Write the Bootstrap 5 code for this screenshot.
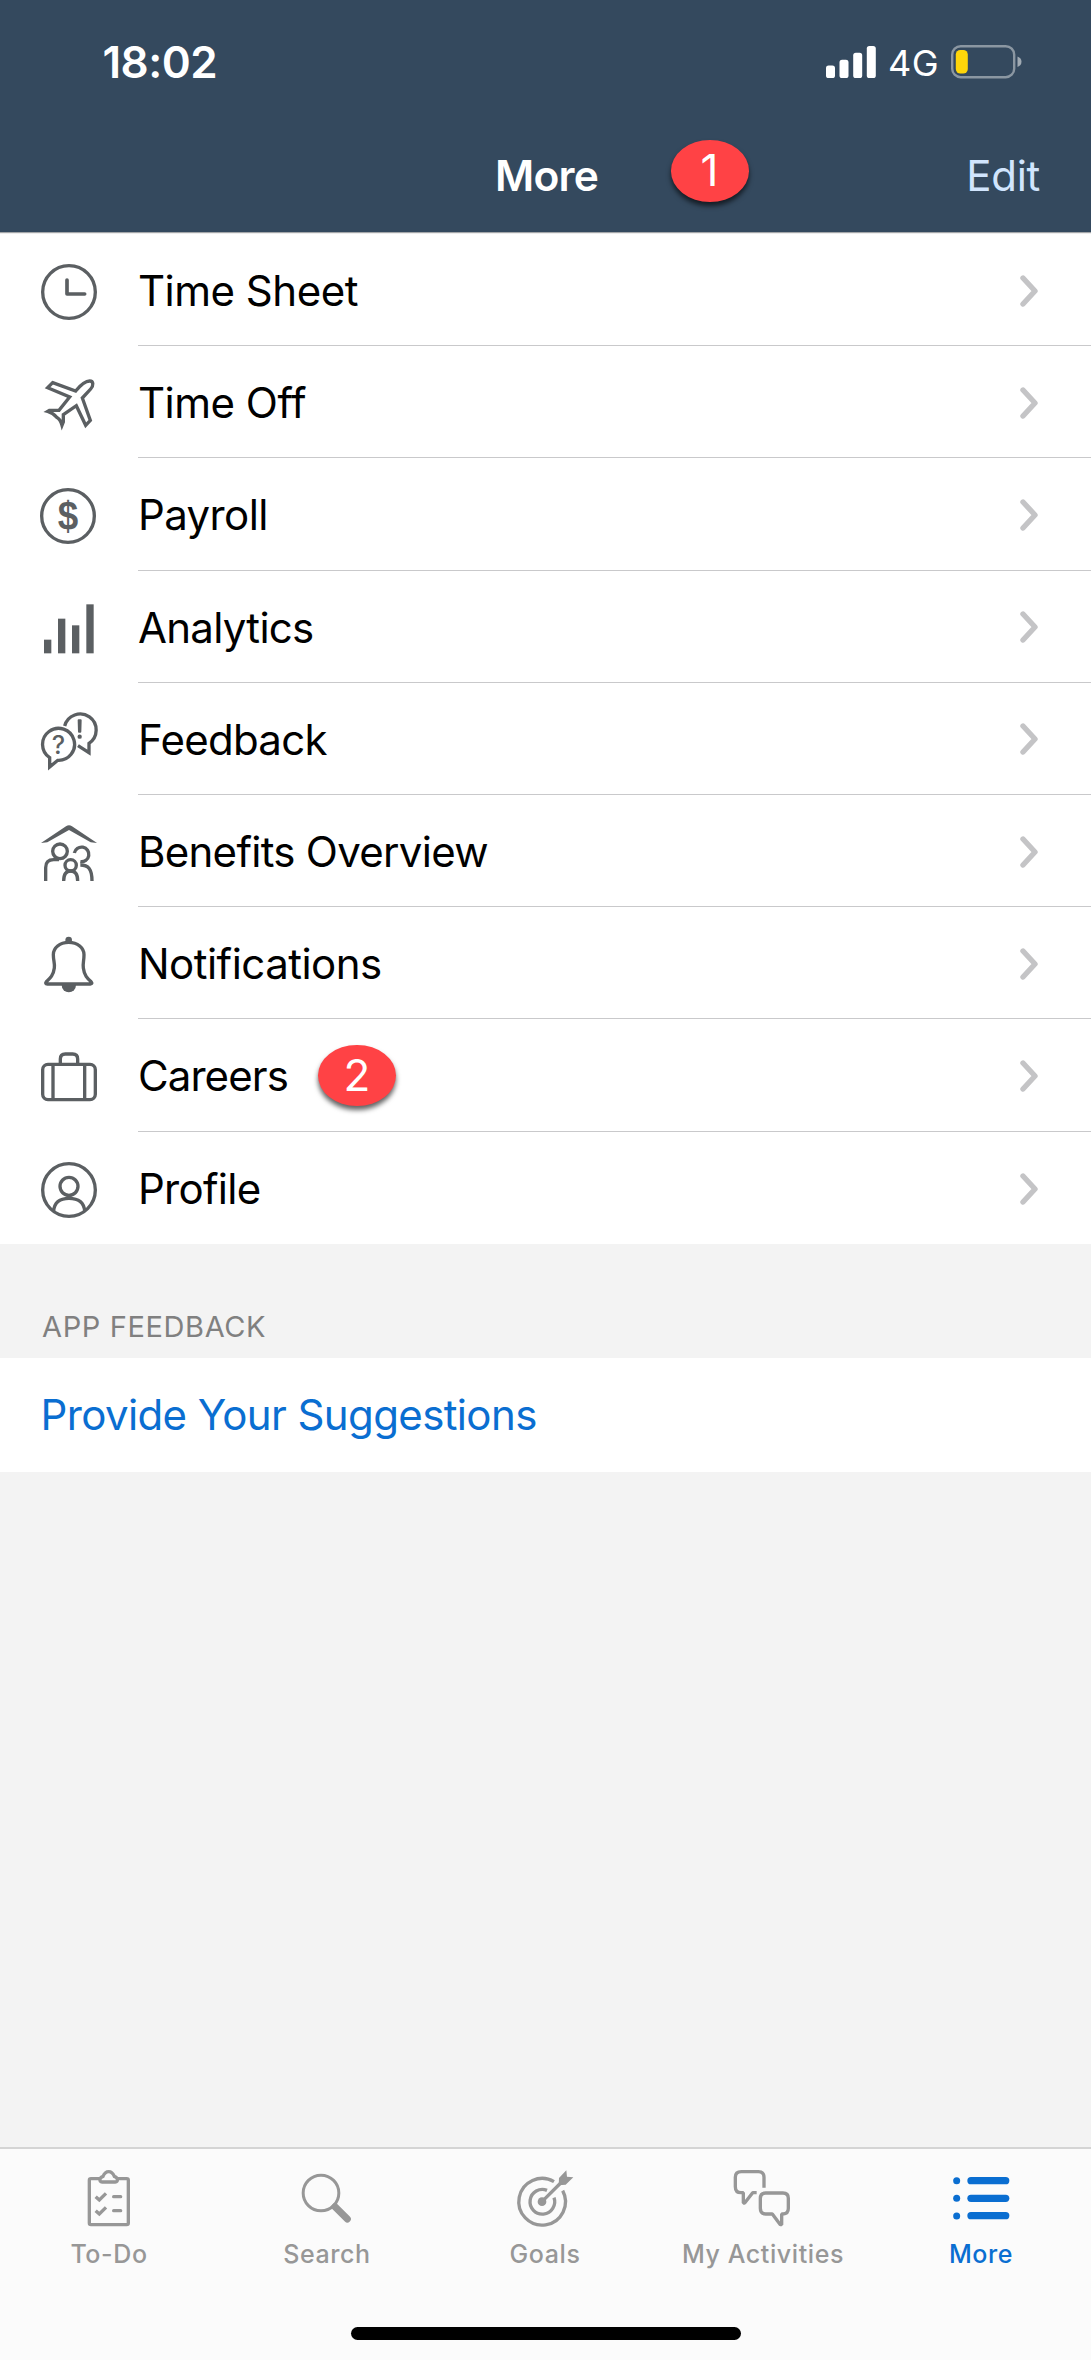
<!DOCTYPE html>
<html lang="en">
<head>
<meta charset="utf-8">
<meta name="viewport" content="width=device-width, initial-scale=1">
<title>More</title>
<link href="https://cdn.jsdelivr.net/npm/bootstrap@5.3.0/dist/css/bootstrap.min.css" rel="stylesheet">
<style>
body{font-family:Inter,"Liberation Sans",sans-serif;background:#fff;color:#000}
.screen{width:1091px;height:2360px;background:#f3f3f3;overflow:hidden}
.topbar{height:232px;background:#34495e}
.statusbar{height:124px;padding-left:102.5px;padding-right:69px}
.clock-time{font-size:44px;font-weight:600;line-height:124px;letter-spacing:-.5px}
.net{font-size:36px;line-height:124px;letter-spacing:.5px;margin:2px 12px 0 12px}
.titlebar{height:108px}
.page-title{font-size:42.5px;font-weight:600;line-height:104px;letter-spacing:-.8px;padding-left:2px}
.edit-link{font-size:42px;line-height:104px;letter-spacing:-.3px;color:#d1e5fd;right:51px;top:0}
.callout{width:78px;height:61.5px;border-radius:50%;background:#ff4245;color:#fff;font-size:44px;line-height:60px;letter-spacing:0;box-shadow:0 4px 5px rgba(0,0,0,.62)}
.callout-title{left:670.5px;top:16.3px}
.callout-row{left:180px;top:25.5px}
.topline{height:2px;background:linear-gradient(#a3a6a9 50%,#ededed 50%)}
.menu-row{height:112.2px;padding-left:41px;background:#fff}
.row-icon{width:56px;height:56px;margin-top:30px;margin-right:41px}
.row-body{border-bottom:1px solid #c9c9cb;font-size:42px;letter-spacing:-.6px;padding-right:53px;padding-top:2px}
.menu-row:last-child .row-body{border-bottom:0}
.menu-row:nth-child(-n+2) .row-body{letter-spacing:-.5px}
.menu-row:nth-child(n+4) .row-body{letter-spacing:-.72px}
.menu-row:nth-child(7) .row-body{letter-spacing:-.53px}
.menu-row:nth-child(8) .row-body{letter-spacing:-.92px}
.ico{fill:none;stroke:#5b5f62;stroke-width:10;overflow:visible;display:block}
.ico .solid{fill:#5b5f62;stroke:none}
.chev{fill:none;stroke:#c4c4c6;stroke-width:5.4;stroke-linecap:round;stroke-linejoin:round}
.section-head{height:114px;padding:64px 0 0 42px;font-size:29px;line-height:38px;letter-spacing:.62px;color:#808080}
.suggest{height:114px;padding-left:40.5px;font-size:42px;line-height:114px;letter-spacing:-.62px;color:#0a6ed1}
.tabs-bar{height:213px;background:#fbfbfb;border-top:2px solid #d4d4d4;padding-top:21px}
.tab-item{width:218px;font-size:25px;font-weight:500;color:#979797;line-height:30px;letter-spacing:.6px}
.tab-item .ico{width:56px;height:56px;stroke:#979797;margin-bottom:13px}
.tab-item .ico .solid{fill:#979797}
.tab-item.on{color:#0a6ed1}
.tab-item.on .ico .solid{fill:#0a6ed1}
.home-pill{width:390px;height:13px;border-radius:7px;background:#000;margin-top:58px}
</style>
<script src="https://cdn.jsdelivr.net/npm/bootstrap@5.3.0/dist/js/bootstrap.bundle.min.js"></script>
</head>
<body>
<svg width="0" height="0" class="position-absolute"><defs>
<symbol id="chevron" viewBox="0 0 18 32"><path d="M3 3 15 16 3 29"/></symbol>
</defs></svg>
<div class="screen d-flex flex-column">
  <header class="topbar text-white">
    <div class="statusbar d-flex align-items-center justify-content-between">
      <div class="clock-time">18:02</div>
      <div class="d-flex align-items-center">
        <svg width="50" height="32" viewBox="0 0 50 32" fill="#fff"><rect x="0" y="19.5" width="9" height="12.5" rx="2.6"/><rect x="13.5" y="13.8" width="9" height="18.2" rx="2.6"/><rect x="27.2" y="6.8" width="9" height="25.2" rx="2.6"/><rect x="40.8" y="0" width="9" height="32" rx="2.6"/></svg>
        <div class="net">4G</div>
        <svg width="71" height="34" viewBox="0 0 71 34"><rect x="1.2" y="1.2" width="62" height="31" rx="8.5" fill="none" stroke="#8b97a2" stroke-width="2.4"/><rect x="4.8" y="5" width="12" height="23.5" rx="4.5" fill="#ffd60a"/><path d="M66.5 11.5Q70.5 13 70.5 16.8T66.500 22Z" fill="#a0aab3"/></svg>
      </div>
    </div>
    <div class="titlebar position-relative text-center">
      <div class="page-title">More</div>
      <span class="callout callout-title position-absolute">1</span>
      <a class="edit-link position-absolute text-decoration-none" href="#">Edit</a>
    </div>
  </header>
  <div class="topline"></div>
  <main class="flex-grow-1">
    <div class="menu">
      <div class="menu-row d-flex">
        <svg class="ico row-icon flex-shrink-0" viewBox="0 0 168 168"><circle cx="84" cy="84" r="79"/><path d="M78 48V90H131" stroke-width="11" stroke-linecap="round" stroke-linejoin="round"/></svg>
        <div class="row-body flex-grow-1 d-flex align-items-center justify-content-between"><span>Time Sheet</span><svg class="chev" width="18" height="32"><use href="#chevron"/></svg></div>
      </div>
      <div class="menu-row d-flex">
        <svg class="ico row-icon flex-shrink-0" viewBox="0 0 168 168"><path d="M35 20 104 45C118 28 131 15 146 15C158 15 158 29 149 39L124 66 148 133 134 148 106 89 67 116V138L63 148C60 137 55 128 47 124C39 114 31 109 20 106L25 103H54L86 63 20 35Z"/></svg>
        <div class="row-body flex-grow-1 d-flex align-items-center justify-content-between"><span>Time Off</span><svg class="chev" width="18" height="32"><use href="#chevron"/></svg></div>
      </div>
      <div class="menu-row d-flex">
        <svg class="ico row-icon flex-shrink-0" viewBox="0 0 168 168"><circle cx="81" cy="84" r="79"/><text class="solid" transform="translate(81 126) scale(.92 1)" font-family="Liberation Sans" font-weight="700" font-size="120" text-anchor="middle">$</text></svg>
        <div class="row-body flex-grow-1 d-flex align-items-center justify-content-between"><span>Payroll</span><svg class="chev" width="18" height="32"><use href="#chevron"/></svg></div>
      </div>
      <div class="menu-row d-flex">
        <svg class="ico row-icon flex-shrink-0" viewBox="0 0 168 168"><g class="solid"><rect x="9" y="116" width="22" height="41"/><rect x="51" y="53" width="22" height="104"/><rect x="93" y="73" width="22" height="84"/><rect x="136" y="10" width="22" height="147"/></g></svg>
        <div class="row-body flex-grow-1 d-flex align-items-center justify-content-between"><span>Analytics</span><svg class="chev" width="18" height="32"><use href="#chevron"/></svg></div>
      </div>
      <div class="menu-row d-flex">
        <svg class="ico row-icon flex-shrink-0" viewBox="0 0 168 168"><path d="M26 134V162L50 142A48 48 0 1 0 26 134Z"/><path d="M71 39A48 48 0 1 1 144 91V119L111 98"/><path d="M113 22H119L118 56H114Z" stroke-width="6" stroke-linejoin="round"/><circle class="solid" cx="116" cy="71" r="6.500"/><text class="solid" x="52" y="123" font-family="Inter" font-weight="500" font-size="76" text-anchor="middle">?</text></svg>
        <div class="row-body flex-grow-1 d-flex align-items-center justify-content-between"><span>Feedback</span><svg class="chev" width="18" height="32"><use href="#chevron"/></svg></div>
      </div>
      <div class="menu-row d-flex">
        <svg class="ico row-icon flex-shrink-0" viewBox="0 0 168 168"><path class="solid" d="M0 54 75 4Q84-3 93 4L168 54 149 52 84 15 19 52Z"/><circle cx="57" cy="79" r="22"/><path d="M14 168V128Q14 104 38 104H54"/><path d="M100 84A22 22 0 1 1 118 110"/><path d="M118 120C142 120 153 132 153 168"/><circle cx="89" cy="121" r="17"/><path d="M68 168C68 147 76 138 89 138S110 147 110 168"/></svg>
        <div class="row-body flex-grow-1 d-flex align-items-center justify-content-between"><span>Benefits Overview</span><svg class="chev" width="18" height="32"><use href="#chevron"/></svg></div>
      </div>
      <div class="menu-row d-flex">
        <svg class="ico row-icon flex-shrink-0" viewBox="0 0 168 168"><circle class="solid" cx="83" cy="9" r="10"/><path d="M83 16C56 16 37 33 37 53C37 72 42 78 40 93C37 116 27 124 16 134Q11 141 19 141H148Q156 141 150 134C139 124 130 116 127 93C125 78 129 72 129 53C129 33 110 16 83 16Z"/><path class="solid" d="M62 144H105A21.500 22 0 0 1 62 144Z"/></svg>
        <div class="row-body flex-grow-1 d-flex align-items-center justify-content-between"><span>Notifications</span><svg class="chev" width="18" height="32"><use href="#chevron"/></svg></div>
      </div>
      <div class="menu-row d-flex">
        <svg class="ico row-icon flex-shrink-0" viewBox="0 0 168 168"><rect x="5" y="46" width="158" height="106" rx="16"/><path d="M36 46V152M131 46V152M58 46V30Q58 15 73 15H95Q110 15 110 30V46"/></svg>
        <div class="row-body flex-grow-1 d-flex align-items-center justify-content-between position-relative"><span>Careers</span><span class="callout callout-row position-absolute text-center">2</span><svg class="chev" width="18" height="32"><use href="#chevron"/></svg></div>
      </div>
      <div class="menu-row d-flex">
        <svg class="ico row-icon flex-shrink-0" viewBox="0 0 168 168"><circle cx="84" cy="84" r="79"/><circle cx="84" cy="73" r="27"/><path d="M38 147C40 122 56 109 84 109S129 122 131 147"/></svg>
        <div class="row-body flex-grow-1 d-flex align-items-center justify-content-between"><span>Profile</span><svg class="chev" width="18" height="32"><use href="#chevron"/></svg></div>
      </div>
    </div>
    <div class="section-head">APP FEEDBACK</div>
    <div class="suggest bg-white">Provide Your Suggestions</div>
  </main>
  <nav class="tabs-bar d-flex flex-column align-items-center flex-shrink-0">
    <div class="d-flex align-self-start">
      <div class="tab-item d-flex flex-column align-items-center">
        <svg class="ico" viewBox="0 0 168 168"><rect x="25" y="26" width="117" height="138" rx="5"/><path d="M63 36Q56 36 57 28Q58 22 66 19Q72 5 83 5Q94 5 100 19Q108 22 109 28Q110 36 103 36Z" fill="#fbfbfb"/><path d="M44 80 55 90 75 70M44 122 55 132 75 112"/><path d="M98 80H119M98 122H119" stroke-width="10" stroke-linecap="round"/></svg>To-Do
      </div>
      <div class="tab-item d-flex flex-column align-items-center">
        <svg class="ico" viewBox="0 0 168 168"><circle cx="66" cy="69" r="53.500" stroke-width="9"/><path d="M108 110 145 147" stroke-width="21" stroke-linecap="round"/></svg>Search
      </div>
      <div class="tab-item d-flex flex-column align-items-center">
        <svg class="ico" viewBox="0 0 168 168"><path d="M111 35A70 70 0 1 0 137 62"/><path d="M90 61A37 37 0 1 0 111 83M75 95 131 39"/><circle class="solid" cx="75" cy="95" r="13"/><path class="solid" d="M125 50 126 24 148 1 150 20 169 22 146 44 124 46Z"/></svg>Goals
      </div>
      <div class="tab-item d-flex flex-column align-items-center">
        <svg class="ico" viewBox="0 0 168 168"><path d="M87 53V22Q87 5 70 5H19Q1 5 1 22V50Q1 68 18 68H25V99H29L53 68H65" stroke-linejoin="bevel"/><path d="M92 69H144Q160 69 160 85V115Q160 132 144 132H140V164H136L112 132H92Q76 132 76 115V85Q76 69 92 69Z" stroke-linejoin="bevel"/></svg>My Activities
      </div>
      <div class="tab-item on d-flex flex-column align-items-center">
        <svg class="ico" viewBox="0 0 168 168"><g class="solid"><circle cx="11" cy="32" r="10.500"/><circle cx="11" cy="85" r="10.500"/><circle cx="11" cy="138" r="10.500"/><rect x="43" y="21" width="126" height="22" rx="11"/><rect x="43" y="74" width="126" height="22" rx="11"/><rect x="43" y="126" width="126" height="22" rx="11"/></g></svg>More
      </div>
    </div>
    <div class="home-pill"></div>
  </nav>
</div>
</body></html>
